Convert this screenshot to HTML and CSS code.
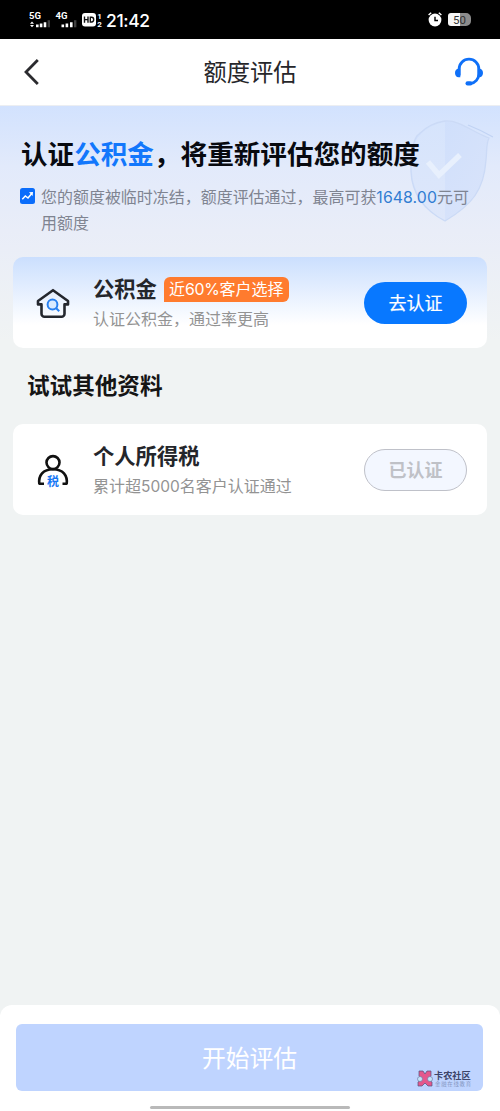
FILE: index.html
```html
<!DOCTYPE html>
<html lang="zh-CN">
<head>
<meta charset="utf-8">
<title>额度评估</title>
<link rel="stylesheet" href="styles.css">
</head>
<body>
<div class="screen">
  <header class="status">
    <svg class="signal" width="50" height="18" viewBox="0 0 50 18" fill="#fff">
      <text class="net" x="0" y="8" textLength="12">5G</text>
      <path d="M1 12.8 3 10.5 5 12.8zM1 14 3 16.3 5 14zM7 13.5h2.6v2.8H7zM10.8 12.6h2.6v3.7h-2.6zM14.7 11.3h2.6v5h-2.6z"/>
      <path opacity=".25" d="M18.6 9.2H21v7.1h-2.4z"/>
      <text class="net" x="26.5" y="8" textLength="12">4G</text>
      <path d="M32.5 13.5h2.6v2.8h-2.6zM36.6 12.6h2.6v3.7h-2.6zM41 11.3h2.6v5H41z"/>
      <path opacity=".25" d="M45 9.2h2.4v7.1H45z"/>
    </svg>
    <svg class="hd" width="21" height="16" viewBox="0 0 21 16">
      <rect x="0" y="1" width="14" height="13.5" rx="3" fill="#fff"/>
      <path d="M2.5 4.5v6.2M6 4.5v6.2M2.5 7.6H6M8.3 5.2v4.8h1.4c1.3 0 2-.8 2-2.4s-.7-2.4-2-2.4z" fill="none" stroke="#111" stroke-width="1.4"/>
      <text class="sim" x="15.2" y="6.8">1</text>
      <text class="sim" x="15.2" y="15">2</text>
    </svg>
    <span class="clock">21:42</span>
    <svg class="alarm" width="14" height="15" viewBox="0 0 14 15">
      <circle cx="7" cy="8" r="6.4" fill="#fff"/>
      <path d="M.6 3 3.2.8M13.4 3 10.8.8" stroke="#fff" stroke-width="1.5"/>
      <path d="M7 4.8v3.7h3" fill="none" stroke="#000" stroke-width="1.4"/>
    </svg>
    <div class="battery">50</div>
  </header>

  <nav class="navbar">
    <svg class="back" width="18" height="28" viewBox="0 0 18 28"><path d="M15.8 2 4 14l11.800 12" fill="none" stroke="#2b2b2f" stroke-width="2.800"/></svg>
    <h1 class="nav-title">额度评估</h1>
    <svg class="service" width="30" height="30" viewBox="0 0 30 30">
      <path d="M5.200 18.500V12a9.800 9.800 0 0 1 19.600 0v5c0 5-3.500 9-8.300 9.600" fill="none" stroke="#0f70f8" stroke-width="2.800"/>
      <path d="M6.300 11.500v8.700H4.600C2.300 20.200 1 18 1 15.900s1.300-4.400 3.600-4.400zM23.700 11.500v8.700h1.700c2.300 0 3.600-2.200 3.600-4.300s-1.300-4.400-3.600-4.400z" fill="#0f70f8"/>
      <rect x="11.500" y="24.300" width="7" height="4.200" rx="2.100" fill="#0f70f8"/>
    </svg>
  </nav>

  <main class="content">
    <svg class="shield" width="102" height="112" viewBox="0 0 102 112">
      <defs>
        <linearGradient id="face" x1="0" y1="0" x2="1" y2="1"><stop offset="0" stop-color="#cddefc"/><stop offset="1" stop-color="#dae4fa"/></linearGradient>
        <linearGradient id="left" x1="0" y1="0" x2="0" y2="1"><stop offset="0" stop-color="#d6e4fc"/><stop offset="1" stop-color="#dee7fa"/></linearGradient>
      </defs>
      <path d="M19 18C27 10 34 7 45 5c15-1 27 11 44 17-3 6-2 13-3 22-2 30-14 45-41 61C24 94 12 77 11 56c-1-14 2-35 8-38z" fill="url(#face)" stroke="#cbdaf6" stroke-width="1.300"/>
      <path d="M20 19C27 11 35 8 45 6v98C25 94 13 76 12 56c-1-14 2-33 8-37z" fill="url(#left)"/>
      <path d="M68 9c10 4 18 8 25 12" fill="none" stroke="#c1d3f4" stroke-width="1.200"/>
      <path d="m28 46 11 13 21-20" fill="none" stroke="#e8f0fd" stroke-width="5.500"/>
    </svg>
    <section class="intro">
      <h2 class="headline">认证<em>公积金</em>，将重新评估您的额度</h2>
      <div class="notice">
        <svg class="trend" width="15" height="16" viewBox="0 0 15 16">
          <rect width="15" height="16" rx="2.500" fill="#0b6dfb"/>
          <path d="m2.300 11.200 3-3.200 2.700 2 3.800-4.500" fill="none" stroke="#fff" stroke-width="1.500"/>
          <path d="m9 4.300 4-.3-.4 4z" fill="#fff"/>
        </svg>
        <p class="notice-text">您的额度被临时冻结，额度评估通过，最高可获<span class="amount">1648.00</span>元可<br>用额度</p>
      </div>
    </section>

    <section class="card featured">
      <svg class="card-icon" width="34" height="32" viewBox="0 0 34 32">
        <path d="M17 2.200 32 13v3.400h-3.500v9.400a3 3 0 0 1-3 3h-17a3 3 0 0 1-3-3v-9.400H2V13z" fill="none" stroke="#24272e" stroke-width="2.600" stroke-linejoin="round"/>
        <circle cx="16.500" cy="16.500" r="4.900" fill="#d9eaff" stroke="#2880f0" stroke-width="2"/>
        <path d="m20 20 3.200 3.200" stroke="#2880f0" stroke-width="2.100"/>
      </svg>
      <div class="card-body">
        <div class="card-head"><h3 class="card-title">公积金</h3><span class="tag">近<span class="percent">60%</span>客户选择</span></div>
        <p class="card-sub">认证公积金，通过率更高</p>
      </div>
      <button class="pill primary">去认证</button>
    </section>

    <h2 class="section-title">试试其他资料</h2>

    <section class="card">
      <svg class="card-icon" width="34" height="34" viewBox="0 0 34 34">
        <circle cx="17" cy="8.600" r="6.500" fill="none" stroke="#111" stroke-width="2.600"/>
        <path d="M8 29.700H3.300C2.300 21.500 7 15.200 17 15.200s14.700 6.300 13.700 14.500H26.500" fill="none" stroke="#111" stroke-width="2.600" stroke-linejoin="round"/>
        <text class="tax" x="11" y="31.500">税</text>
      </svg>
      <div class="card-body">
        <div class="card-head"><h3 class="card-title">个人所得税</h3></div>
        <p class="card-sub">累计超<span class="count">5000</span>名客户认证通过</p>
      </div>
      <button class="pill done">已认证</button>
    </section>
  </main>

  <footer class="footer">
    <button class="submit">开始评估</button>
    <div class="home-bar"></div>
    <div class="brand">
      <svg width="16" height="17" viewBox="0 0 16 17">
        <path d="M2 1h4l2 3 2-3h4v5l-3 3 4 3v4h-4l-3-3-3 3H1v-4l4-3-3-3z" fill="#e4588d" stroke="#53507d" stroke-width=".7"/>
        <circle cx="3" cy="9" r="2.500" fill="#c6e4fa" stroke="#667199" stroke-width=".6"/>
        <circle cx="13" cy="9" r="2.500" fill="#c6e4fa" stroke="#667199" stroke-width=".6"/>
      </svg>
      <div class="brand-text"><b class="brand-name">卡农社区</b><span class="brand-sub">金融在线教育</span></div>
    </div>
  </footer>
</div>
</body>
</html>
```
FILE: styles.css
```css
* { box-sizing: border-box; }
body, h1, h2, h3, p { margin: 0; }
body { font-family: Roboto, "Noto Sans CJK SC", sans-serif; }
button { border: 0; padding: 0; font-family: inherit; }
svg { display: block; flex: none; }

.screen { width: 500px; height: 1111px; display: flex; flex-direction: column; background: #f0f3f3; overflow: hidden; }

.status { height: 39px; flex: none; display: flex; align-items: center; background: #000; color: #fff; padding: 0 28px 0 29px; }
.net { font: 700 9.5px Roboto, sans-serif; }
.sim { font: 700 8px Roboto, sans-serif; fill: #fff; }
.hd { margin-left: 3px; }
.clock { font: 500 17.5px/20px Inter, sans-serif; margin-left: 3px; letter-spacing: -.4px; padding-top: 2px; }
.alarm { margin-left: auto; }
.battery { width: 23px; height: 13px; margin-left: 6px; margin-right: 1px; border-radius: 3px 5px 5px 3px; background: linear-gradient(90deg, #f6f6f6 52%, #8c8c8c 52%); color: #333; font: 400 11.5px/14px Roboto, sans-serif; text-align: center; }

.navbar { height: 67px; flex: none; display: flex; align-items: center; justify-content: space-between; padding: 0 16px 0 22px; background: #fff; border-bottom: 1px solid #eceef2; }
.nav-title { font-size: 23.3px; font-weight: 400; line-height: 32px; color: #26262a; padding: 2px 0 0 6px; }

.content { flex: 1; position: relative; padding: 30px 13px 0; background: linear-gradient(180deg, #d2e2fe 0, #e2eafb 60px, #e9edf8 125px, #f0f3f3 235px); }
.shield { position: absolute; left: 400px; top: 10px; }
.intro { position: relative; height: 121px; padding-left: 8px; }
.headline { font-size: 26.6px; line-height: 38px; font-weight: 700; color: #080a10; white-space: nowrap; }
.headline em { font-style: normal; color: #1277fc; }
.notice { display: flex; align-items: flex-start; margin: 11px 0 0 -1px; }
.trend { margin-top: 3px; }
.notice-text { width: 440px; margin-left: 6px; font-size: 15.97px; line-height: 26px; color: #7f8491; white-space: nowrap; }
.amount { color: #317dd2; letter-spacing: .1px; font: 400 15.8px/20px Inter, sans-serif; }

.card { height: 91px; display: flex; align-items: center; background: #fff; border-radius: 10px; padding: 0 20px 0 23px; }
.featured { position: relative; background: linear-gradient(180deg, #cbdffe 0, #fff 68px); }
.card-icon { margin-top: 2px; }
.card-body { flex: 1; margin-left: 23px; }
.card-head { display: flex; align-items: center; height: 30px; gap: 7px; padding-top: 1px; }
.card-title { font-size: 21.3px; line-height: 30px; font-weight: 700; color: #24262b; padding-top: 1px; }
.tag { height: 25px; padding: 0 5px; border-radius: 6px 6px 6px 0; background: #ff7b2e; color: #fff; font-size: 16px; line-height: 25px; white-space: nowrap; }
.percent { font-family: Inter, sans-serif; font-size: 15.8px; letter-spacing: -.2px; }
.card-sub { font-size: 16px; line-height: 24px; margin-top: 4px; color: #939393; }
.count { font-family: Inter, sans-serif; font-size: 15.5px; letter-spacing: 0; }
.pill { width: 103px; height: 42px; border-radius: 21px; font-size: 18px; line-height: 43px; }
.primary { background: #0878ff; color: #fff; font-weight: 400; -webkit-text-stroke: .2px currentColor; }
.done { background: #f3f7ff; border: 1.5px solid #bfc1c9; color: #bfc1c7; font-weight: 700; line-height: 41px; }
.tax { font: 700 12px "Noto Sans CJK SC", sans-serif; fill: #1678f5; }
.section-title { height: 76px; padding-left: 14px; font-size: 22.6px; line-height: 77px; font-weight: 700; color: #151515; }

.footer { position: relative; height: 106px; flex: none; padding: 19px 17px 0 16px; border-radius: 12px 12px 0 0; background: #fff; }
.submit { display: block; width: 467px; height: 67px; border-radius: 6px; background: #bfd4ff; color: #fff; font-size: 23.8px; line-height: 71px; }
.home-bar { width: 200px; height: 3px; margin: 15px 0 0 134px; border-radius: 2px; background: #b9b9b9; }
.brand { position: absolute; left: 417px; top: 65px; display: flex; align-items: center; gap: 1px; }
.brand-text { display: flex; flex-direction: column; }
.brand-name { font-size: 9.2px; line-height: 11px; color: #3d4569; white-space: nowrap; }
.brand-sub { font-size: 5.4px; line-height: 6px; letter-spacing: .75px; padding-left: 1px; color: #8697c3; white-space: nowrap; }
```
